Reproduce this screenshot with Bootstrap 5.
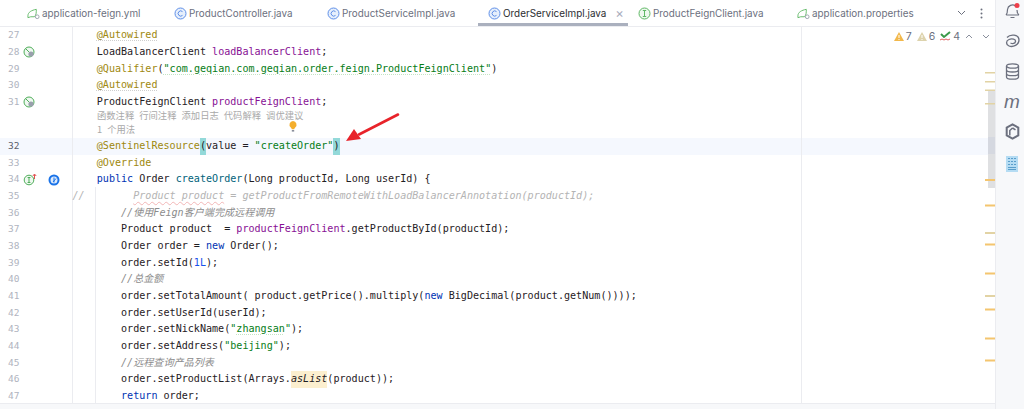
<!DOCTYPE html>
<html lang="en">
<head>
<meta charset="utf-8">
<title>OrderServiceImpl.java</title>
<link rel="stylesheet" href="https://cdn.jsdelivr.net/npm/bootstrap@5.3.0/dist/css/bootstrap.min.css">
<style>
html,body{height:409px;overflow:hidden;background:#fff}
.ide{width:1024px;height:409px}
.tabbar{height:27px;flex:none;border-bottom:1px solid #ebecf0;font:9.9px Inter,"Liberation Sans",sans-serif;color:#6c707e}
.tabitem{height:26px;gap:2px;white-space:nowrap;flex:none}
.tab-a{margin-left:27px;width:147px}.tab-b{width:153px}.tab-c{width:161px}.tab-e{width:159px}.tab-f{width:160px}
.tab-d{color:#2b2d30;border-bottom:3px solid #aab0be;margin-left:-10px;padding-left:10px;padding-top:3px;width:150px}
.tab-e{margin-left:10px}
.tab-close{color:#a8adbd;font-size:13px;margin-left:7px}
.editor{height:382px;padding-top:.4px}
.coderow{height:16.67px;font:10.08px/16.67px "DejaVu Sans Mono","Liberation Mono",monospace;color:#1f2024;white-space:pre}
.ln{width:24px;padding-left:8px;color:#b0b4c0;font-size:9.5px;flex:none}
.gut{width:48.500px;flex:none;border-right:1px solid #ebecf0;height:100%}
.gut svg{flex:none}
.gut .g1{margin-left:-1px}
.gut .g2{margin-left:10px}
.row32{background:#f5f8fe}
.row32 .ln{color:#5a5d6b}
.inlayrow{height:12.5px}.inlayrow2{height:15px}
.inlaytxt{padding-left:24.5px;font:9.3px/9.5px "Noto Sans CJK SC",sans-serif;color:#a9a9a9;white-space:pre;word-spacing:3px}
.inlayrow2 .inlaytxt{line-height:12px}
.inlay-gut{width:72.500px;flex:none;border-right:1px solid #ebecf0}
.an{color:#9e880d}.dot{text-decoration:underline dotted #cfcfcf 1px;text-underline-offset:2px}
.fld{color:#871094}.str{color:#067d17}.kw{color:#0033b3}.num{color:#1750eb}.fn{color:#00627a}
.cm{color:#8c8c8c;font-style:italic;font-family:"DejaVu Sans Mono","Noto Sans CJK SC",monospace}
.dead{color:#b4b4b4;font-style:italic}
.wavy-g{text-decoration:underline dotted #c4e4c4 1px;text-underline-offset:2px}
.wavy-r{text-decoration:underline wavy #f2b6b6 1px;text-underline-offset:2px}
.brace{background:#93d9d9;display:inline-block;height:16.67px}
.hlit{background:#fcefcf;font-style:italic;display:inline-block;height:16.67px}
.margin-line{left:801px;top:0;bottom:6px;width:1px;background:#ebecf0}
.guide{left:95px;top:160px;bottom:6px;width:1px;background:#ebecf0}
.inspect{right:5px;top:2px;height:14px;gap:2px;font:10.5px Inter,sans-serif;color:#6c707e}
.inspect .gp{margin-left:3px}
.inspect .cv{margin-left:7px}
.inspect .cv1{margin-left:3px}
.overlay-svg{left:0;top:0}
.bottomstrip{left:0;right:0;bottom:0;height:6px;background:#f7f8fa;border-top:1px solid #ebecf0}
.sidebar{width:29px;background:#f7f8fa;border-left:1px solid #ebecf0;gap:14px;padding:2px 0 0 4px;flex:none}
.tabtools{gap:14px}
.sidem{font:italic 19px/15px "Liberation Sans",sans-serif;color:#6c707e;height:15px}
.grid-ic{margin-top:2px}
</style>
</head>
<body>
<div class="ide d-flex">
  <div class="flex-grow-1 d-flex flex-column position-relative overflow-hidden">
    <div class="tabbar d-flex">
      <div class="tabitem tab-a d-flex align-items-center">
        <svg width="13" height="13" viewBox="0 0 14 13" fill="none" stroke="#5fb865" stroke-width="1"><path d="M1 9c0-4 4-6 9-7 0 4 0 6-2 8H4l-3 1z"/><circle cx="11" cy="10" r="2" stroke="#9aa0ad"/></svg>
        <span>application-feign.yml</span>
      </div>
      <div class="tabitem tab-b d-flex align-items-center"><svg width="13" height="13" viewBox="0 0 13 13" fill="#e6effc" stroke="#5f8fe8"><circle cx="6.5" cy="6.5" r="5.5"/><path d="M8.5 4.6a2.6 2.6 0 1 0 0 3.8" fill="none"/></svg><span>ProductController.java</span></div>
      <div class="tabitem tab-c d-flex align-items-center"><svg width="13" height="13" viewBox="0 0 13 13" fill="#e6effc" stroke="#5f8fe8"><circle cx="6.5" cy="6.5" r="5.5"/><path d="M8.5 4.6a2.6 2.6 0 1 0 0 3.8" fill="none"/></svg><span>ProductServiceImpl.java</span></div>
      <div class="tabitem tab-d d-flex align-items-center"><svg width="13" height="13" viewBox="0 0 13 13" fill="#e6effc" stroke="#5f8fe8"><circle cx="6.5" cy="6.5" r="5.5"/><path d="M8.5 4.6a2.6 2.6 0 1 0 0 3.8" fill="none"/></svg><span>OrderServiceImpl.java</span><span class="tab-close">&#215;</span></div>
      <div class="tabitem tab-e d-flex align-items-center"><svg width="13" height="13" viewBox="0 0 13 13" fill="#edf8ee" stroke="#5fb865"><circle cx="6.5" cy="6.5" r="5.5"/><path d="M6.5 3.5v6M4.8 3.5h3.4M4.8 9.5h3.4" fill="none"/></svg><span>ProductFeignClient.java</span></div>
      <div class="tabitem tab-f d-flex align-items-center">
        <svg width="13" height="13" viewBox="0 0 14 13" fill="none" stroke="#5fb865" stroke-width="1"><path d="M1 9c0-4 4-6 9-7 0 4 0 6-2 8H4l-3 1z"/><circle cx="11" cy="10" r="2" stroke="#9aa0ad"/></svg>
        <span>application.properties</span>
      </div>
      <div class="tabtools tabitem d-flex align-items-center">
        <svg width="9" height="6" viewBox="0 0 9 6" fill="none" stroke="#6c707e"><path d="M1 1l3.500 3.500L8 1"/></svg>
        <svg width="3" height="11" viewBox="0 0 3 11" fill="#6c707e"><circle cx="1.500" cy="1.500" r="1"/><circle cx="1.500" cy="5.500" r="1"/><circle cx="1.500" cy="9.500" r="1"/></svg>
      </div>
    </div>
    <div class="editor position-relative overflow-hidden">
      <div class="coderow d-flex"><span class="ln">27</span><span class="gut d-flex align-items-center"></span><span>    <span class="an dot">@Autowired</span></span></div>
      <div class="coderow d-flex"><span class="ln">28</span><span class="gut d-flex align-items-center"><svg class="g1" width="12" height="12" viewBox="0 0 12 12" fill="none"><circle cx="6" cy="6" r="5" stroke="#4fae5a" fill="#eff8f0"/><path d="M2.500 2.500l7 7" stroke="#4fae5a"/><circle cx="8" cy="8" r="2.600" fill="#9aa0ad"/></svg></span><span>    LoadBalancerClient <span class="fld">loadBalancerClient</span>;</span></div>
      <div class="coderow d-flex"><span class="ln">29</span><span class="gut d-flex align-items-center"></span><span>    <span class="an">@Qualifier</span>(<span class="str wavy-g">"com.geqian.com.geqian.order.feign.ProductFeignClient"</span>)</span></div>
      <div class="coderow d-flex"><span class="ln">30</span><span class="gut d-flex align-items-center"></span><span>    <span class="an dot">@Autowired</span></span></div>
      <div class="coderow d-flex"><span class="ln">31</span><span class="gut d-flex align-items-center"><svg class="g1" width="12" height="12" viewBox="0 0 12 12" fill="none"><circle cx="6" cy="6" r="5" stroke="#4fae5a" fill="#eff8f0"/><path d="M2.500 2.500l7 7" stroke="#4fae5a"/><circle cx="8" cy="8" r="2.600" fill="#9aa0ad"/></svg></span><span>    ProductFeignClient <span class="fld">productFeignClient</span>;</span></div>
      <div class="inlayrow d-flex"><span class="inlay-gut"></span><span class="inlaytxt">函数注释 行间注释 添加日志 代码解释 调优建议</span></div>
      <div class="inlayrow2 d-flex"><span class="inlay-gut"></span><span class="inlaytxt">1 个用法</span></div>
      <div class="coderow row32 d-flex"><span class="ln">32</span><span class="gut d-flex align-items-center"></span><span>    <span class="an">@SentinelResource</span><span class="brace">(</span>value = <span class="str">"createOrder"</span><span class="brace">)</span></span></div>
      <div class="coderow d-flex"><span class="ln">33</span><span class="gut d-flex align-items-center"></span><span>    <span class="an">@Override</span></span></div>
      <div class="coderow d-flex"><span class="ln">34</span><span class="gut d-flex align-items-center"><svg class="g1" width="15" height="13" viewBox="0 0 15 13" fill="none"><circle cx="6" cy="7" r="4.800" stroke="#4fae5a" fill="#eff8f0"/><path d="M6 4.500v5M4.600 4.500h2.800M4.600 9.500h2.800" stroke="#4fae5a"/><path d="M11.500 6V1.500M9.800 3l1.700-2 1.700 2" stroke="#e25050"/></svg><svg class="g2" width="12" height="12" viewBox="0 0 12 12" fill="none"><circle cx="6" cy="6" r="4.500" stroke="#1a73e8" stroke-width="2" fill="#dceafc"/><path d="M6 3.500v5M8 4.500L5 8" stroke="#1a73e8"/></svg></span><span>    <span class="kw">public</span> Order <span class="fn">createOrder</span>(Long productId, Long userId) {</span></div>
      <div class="coderow d-flex"><span class="ln">35</span><span class="gut d-flex align-items-center"></span><span><span class="dead">//        <span class="wavy-r">Product product</span> = getProductFromRemoteWithLoadBalancerAnnotation(productId);</span></span></div>
      <div class="coderow d-flex"><span class="ln">36</span><span class="gut d-flex align-items-center"></span><span>        <span class="cm">//使用Feign客户端完成远程调用</span></span></div>
      <div class="coderow d-flex"><span class="ln">37</span><span class="gut d-flex align-items-center"></span><span>        Product product  = <span class="fld">productFeignClient</span>.getProductById(productId);</span></div>
      <div class="coderow d-flex"><span class="ln">38</span><span class="gut d-flex align-items-center"></span><span>        Order order = <span class="kw">new</span> Order();</span></div>
      <div class="coderow d-flex"><span class="ln">39</span><span class="gut d-flex align-items-center"></span><span>        order.setId(<span class="num">1L</span>);</span></div>
      <div class="coderow d-flex"><span class="ln">40</span><span class="gut d-flex align-items-center"></span><span>        <span class="cm">//总金额</span></span></div>
      <div class="coderow d-flex"><span class="ln">41</span><span class="gut d-flex align-items-center"></span><span>        order.setTotalAmount( product.getPrice().multiply(<span class="kw">new</span> BigDecimal(product.getNum())));</span></div>
      <div class="coderow d-flex"><span class="ln">42</span><span class="gut d-flex align-items-center"></span><span>        order.setUserId(userId);</span></div>
      <div class="coderow d-flex"><span class="ln">43</span><span class="gut d-flex align-items-center"></span><span>        order.setNickName(<span class="str">"<span class="wavy-g">zhangsan</span>"</span>);</span></div>
      <div class="coderow d-flex"><span class="ln">44</span><span class="gut d-flex align-items-center"></span><span>        order.setAddress(<span class="str">"beijing"</span>);</span></div>
      <div class="coderow d-flex"><span class="ln">45</span><span class="gut d-flex align-items-center"></span><span>        <span class="cm">//远程查询产品列表</span></span></div>
      <div class="coderow d-flex"><span class="ln">46</span><span class="gut d-flex align-items-center"></span><span>        order.setProductList(Arrays.<span class="hlit">asList</span>(product));</span></div>
      <div class="coderow d-flex"><span class="ln">47</span><span class="gut d-flex align-items-center"></span><span>        <span class="kw">return</span> order;</span></div>

      <div class="margin-line position-absolute"></div>
      <div class="guide position-absolute"></div>
      <div class="inspect position-absolute d-flex align-items-center">
        <svg width="10" height="9" viewBox="0 0 10 9"><path d="M5 0l5 9H0z" fill="#f2b84b"/><path d="M5 3v3M5 7v1" stroke="#fff"/></svg><span>7</span>
        <svg class="gp" width="10" height="9" viewBox="0 0 10 9"><path d="M5 0l5 9H0z" fill="#ddd3ad"/><path d="M5 3v3M5 7v1" stroke="#fff"/></svg><span>6</span>
        <svg class="gp" width="11" height="10" viewBox="0 0 11 10" fill="none"><path d="M1 3l3 3 6-5" stroke="#3a9a4a" stroke-width="2"/><path d="M0 9l2-1 2 1 2-1 2 1 2-1" stroke="#e06060"/></svg><span>4</span>
        <svg class="cv cv1" width="8" height="5" viewBox="0 0 8 5" fill="none" stroke="#8a8f9c"><path d="M1 4l3-3 3 3"/></svg>
        <svg class="cv" width="8" height="5" viewBox="0 0 8 5" fill="none" stroke="#8a8f9c"><path d="M1 1l3 3 3-3"/></svg>
      </div>
      <div class="bottomstrip position-absolute"></div>
    </div>
    <svg class="overlay-svg position-absolute" width="995" height="409" viewBox="0 0 995 409" fill="none">
      <g>
        <path d="M293 121a3.600 3.600 0 0 0-2.200 6.400c.7.6.9 1.200 1 1.800h2.400c.1-.6.3-1.200 1-1.800A3.600 3.600 0 0 0 293 121z" fill="#f4ae2c"/>
        <rect x="291.800" y="130" width="2.400" height="1.600" fill="#8a8f9c"/>
      </g>
      <path d="M398 114.500L359 134.500" stroke="#e8232a" stroke-width="2.600" stroke-linecap="round"/>
      <path d="M346 141l8-12 7 10z" fill="#e8232a"/>
      <rect x="988" y="90" width="7" height="98" fill="#dfe0e2"/>
      <rect x="988" y="137" width="7" height="17" fill="#d5d8e0"/>
      <g fill="#e2d3a4">
        <rect x="985" y="72" width="10" height="1.500"/><rect x="985" y="81" width="10" height="1.500"/><rect x="985" y="89.500" width="10" height="1.500"/><rect x="985" y="103" width="10" height="1.500"/>
        <rect x="985" y="232" width="10" height="2"/><rect x="985" y="295" width="10" height="2"/>
      </g>
      <g fill="#f4c56f">
        <rect x="985" y="179" width="10" height="2"/><rect x="985" y="204.500" width="10" height="2"/><rect x="985" y="243.500" width="10" height="2"/><rect x="985" y="272.500" width="10" height="2"/><rect x="985" y="308.500" width="10" height="2"/><rect x="985" y="337.500" width="10" height="2"/><rect x="985" y="359.500" width="10" height="2"/>
      </g>
    </svg>
  </div>
  <div class="sidebar d-flex flex-column align-items-center">
    <svg width="17" height="17" viewBox="0 0 17 17" fill="none" stroke="#6c707e" stroke-width="1.200"><path d="M2 13c1.500-1.500 1.500-3 1.500-5.500a5 5 0 0 1 8-3.500M13 8c0 2.500.5 4 2 5M2 13h13M6.500 15.500h4"/><circle cx="13" cy="3.500" r="2.500" fill="#ed3f4a" stroke="none"/></svg>
    <svg width="16" height="16" viewBox="0 0 16 16" fill="none" stroke="#6c707e" stroke-width="1.300"><path d="M3 4.500C6 1 15 1 15 7c0 5-6 7.500-10 6-3-1.200-3.500-5 0-6.500 3-1.300 7-.3 6.500 2s-3 2.500-5 1.500"/></svg>
    <svg width="15" height="17" viewBox="0 0 15 17" fill="none" stroke="#6c707e" stroke-width="1.300"><ellipse cx="7.500" cy="3" rx="6" ry="2.200"/><path d="M1.500 3v11c0 1.200 2.700 2.200 6 2.200s6-1 6-2.200V3M1.500 6.800c0 1.200 2.700 2.200 6 2.200s6-1 6-2.200M1.500 10.500c0 1.200 2.700 2.200 6 2.200s6-1 6-2.200"/></svg>
    <span class="sidem">m</span>
    <svg width="15" height="17" viewBox="0 0 15 17" fill="none" stroke="#6c707e" stroke-width="2"><path d="M7.500 1.300l5.800 3.300v7.800l-5.800 3.300-5.800-3.300V4.600z"/><path d="M7.500 5L4.800 7.500v5M7.500 5l3 1.800" stroke-width="1.500"/></svg>
    <svg class="grid-ic" width="12" height="16" viewBox="0 0 12 16"><rect width="12" height="16" fill="#b5dcf3"/><g fill="#5a9ecb"><rect x="2" y="2" width="2" height="1"/><rect x="5" y="2" width="2" height="1"/><rect x="8" y="2" width="2" height="1"/><rect x="2" y="5" width="2" height="1"/><rect x="5" y="5" width="2" height="1"/><rect x="8" y="5" width="2" height="1"/><rect x="2" y="8" width="2" height="1"/><rect x="5" y="8" width="2" height="1"/><rect x="8" y="8" width="2" height="1"/><rect x="2" y="11" width="8" height="1"/><rect x="2" y="13" width="8" height="1"/></g></svg>
  </div>
</div>
<script src="https://cdn.jsdelivr.net/npm/bootstrap@5.3.0/dist/js/bootstrap.bundle.min.js"></script>
</body>
</html>
